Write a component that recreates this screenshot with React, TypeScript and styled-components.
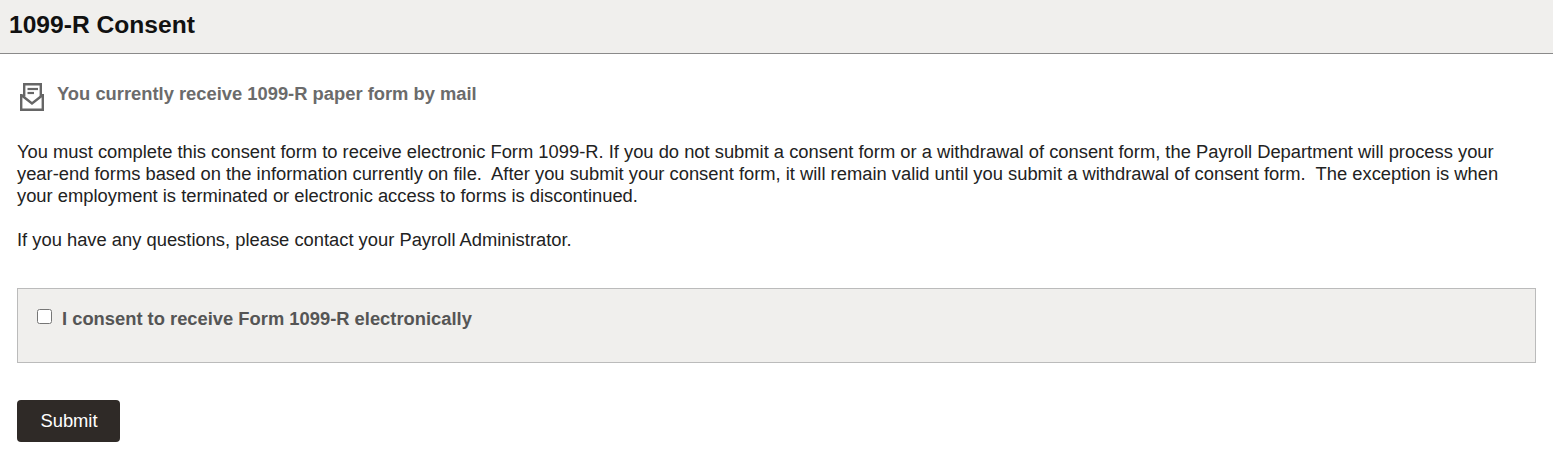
import styled, { createGlobalStyle } from "styled-components";

const GlobalStyle = createGlobalStyle`
    html, body {
        margin: 0;
        padding: 0;
        background: #fff;
        font-family: "Liberation Sans", Arial, sans-serif;
    }
`;

const Header = styled.div`
    height: 54px;
    box-sizing: border-box;
    background-color: #f0efed;
    border-bottom: 1px solid #8a8a8a;
    padding: 11px 9px 0;
`;

const Title = styled.h1`
    margin: 0;
    font-size: 24.6px;
    line-height: 28px;
    font-weight: 700;
    color: #111;
`;

const Content = styled.div`
    padding: 29px 17px 0;
`;

const Status = styled.div`
    display: flex;
    align-items: flex-start;
    gap: 13px;
    padding-left: 3px;
    height: 58px;
`;

const StatusText = styled.div`
    font-size: 18.35px;
    line-height: 22px;
    font-weight: 700;
    color: #6b6b6b;
`;

const Paragraph = styled.p`
    margin: 0 0 22px;
    padding-right: 30px;
    font-size: 18.35px;
    line-height: 22px;
    color: #222;
    white-space: pre-wrap;
`;

const ConsentBox = styled.div`
    margin-top: 37px;
    height: 75px;
    box-sizing: border-box;
    background-color: #f0efed;
    border: 1px solid #bbb;
    padding: 18px 19px;
    display: flex;
    align-items: flex-start;
    gap: 10px;
`;

const Check = styled.input`
    margin: 2px 0 0;
    width: 15px;
    height: 15px;
`;

const ConsentLabel = styled.label`
    font-size: 18.35px;
    line-height: 24px;
    font-weight: 700;
    color: #555;
`;

const SubmitButton = styled.button`
    display: block;
    margin-top: 37px;
    width: 103px;
    height: 42px;
    padding-left: 7px;
    background-color: #2f2a27;
    color: #fff;
    border: none;
    border-radius: 4px;
    font-family: inherit;
    font-size: 18.35px;
`;

const MailIcon = () => (
    <svg width="24" height="28" viewBox="0 0 24 28" fill="none" stroke="#666" strokeWidth="2.4">
        <path d="M1.2 11V26.8H22.8V11" />
        <path d="M1.2 12L12 20.5L22.8 12" />
        <path d="M4.2 13.5V1.2H20.8V13.5" />
        <path d="M7.5 6H18" strokeWidth="2.2" />
        <path d="M7.5 10H14" strokeWidth="2.2" />
    </svg>
);

const App = () => {
    return (
        <>
            <GlobalStyle />
            <Header>
                <Title>1099-R Consent</Title>
            </Header>
            <Content>
                <Status>
                    <MailIcon />
                    <StatusText>You currently receive 1099-R paper form by mail</StatusText>
                </Status>
                <Paragraph>
                    {"You must complete this consent form to receive electronic Form 1099-R. If you do not submit a consent form or a withdrawal of consent form, the Payroll Department will process your year-end forms based on the information currently on file.  After you submit your consent form, it will remain valid until you submit a withdrawal of consent form.  The exception is when your employment is terminated or electronic access to forms is discontinued."}
                </Paragraph>
                <Paragraph>If you have any questions, please contact your Payroll Administrator.</Paragraph>
                <ConsentBox>
                    <Check type="checkbox" id="consent" />
                    <ConsentLabel htmlFor="consent">I consent to receive Form 1099-R electronically</ConsentLabel>
                </ConsentBox>
                <SubmitButton type="button">Submit</SubmitButton>
            </Content>
        </>
    );
};

export default App;
